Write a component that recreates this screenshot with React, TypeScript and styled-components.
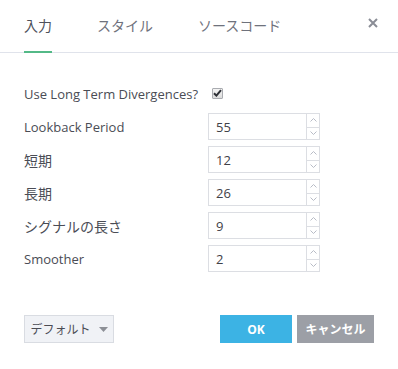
import React from "react";
import styled, { createGlobalStyle } from "styled-components";

const Global = createGlobalStyle`
  html, body { margin: 0; padding: 0; background: #ffffff; }
  body { font-family: "Open Sans", "Noto Sans CJK JP", sans-serif; }
  * { box-sizing: border-box; }
`;

const Dialog = styled.div`
  width: 398px;
  height: 369px;
  background: #fff;
  display: flex;
  flex-direction: column;
  font-family: "Open Sans", "Noto Sans CJK JP", sans-serif;
`;

const Header = styled.div`
  height: 53px;
  border-bottom: 1px solid #e0e3eb;
  display: flex;
  align-items: stretch;
  padding: 0 20px 0 24px;
  gap: 45px;
`;

const Tab = styled.div<{ $active?: boolean }>`
  display: flex;
  align-items: center;
  font-size: 14px;
  color: ${(p) => (p.$active ? "#4f525c" : "#6f727c")};
  position: relative;
  padding-bottom: 2px;
  &::after {
    content: "";
    display: ${(p) => (p.$active ? "block" : "none")};
    position: absolute;
    left: 0;
    right: 0;
    bottom: -1px;
    height: 2px;
    background: #53b987;
  }
`;

const Close = styled.div`
  margin-left: auto;
  display: flex;
  align-items: center;
  padding-bottom: 6px;
  color: #8a8d96;
`;

const Body = styled.div`
  padding: 27px 24px 0 24px;
  display: flex;
  flex-direction: column;
  gap: 6px;
`;

const Row = styled.div`
  display: grid;
  grid-template-columns: 184px 112px;
  align-items: center;
  height: 27px;
`;

const Label = styled.div<{ $cjk?: boolean }>`
  font-size: ${(p) => (p.$cjk ? "14px" : "13px")};
  color: #4a4c55;
  white-space: nowrap;
`;

const CheckBox = styled.div`
  width: 11px;
  height: 11px;
  margin-left: 4px;
  margin-top: -1px;
  border: 1px solid #a9abb0;
  border-radius: 1px;
  background: linear-gradient(#f4f4f4, #dcdcdc);
  display: flex;
  align-items: center;
  justify-content: center;
`;

const NumberBox = styled.div`
  height: 27px;
  border: 1px solid #dcdee3;
  display: grid;
  grid-template-columns: 1fr 13px;
  background: #fff;
`;

const Value = styled.div`
  display: flex;
  align-items: center;
  padding-left: 7px;
  font-size: 13px;
  color: #3f4148;
`;

const Spinner = styled.div`
  border-left: 1px solid #dcdee3;
  display: grid;
  grid-template-rows: 1fr 1fr;
`;

const SpinBtn = styled.div<{ $down?: boolean }>`
  display: flex;
  align-items: center;
  justify-content: center;
  border-top: ${(p) => (p.$down ? "1px solid #dcdee3" : "none")};
`;

const Footer = styled.div`
  margin-top: 43px;
  padding: 0 24px;
  display: flex;
  align-items: center;
  height: 28px;
`;

const DefaultBtn = styled.div`
  width: 90px;
  height: 28px;
  border: 1px solid #d9dce2;
  background: #f0f2f6;
  display: flex;
  align-items: center;
  justify-content: center;
  gap: 8px;
  font-size: 12px;
  color: #4a4c55;
`;

const Spacer = styled.div`
  flex: 1;
`;

const ActionBtn = styled.div<{ $primary?: boolean; $w: number }>`
  width: ${(p) => p.$w}px;
  height: 28px;
  display: flex;
  align-items: center;
  justify-content: center;
  font-size: 12px;
  font-weight: 700;
  color: #fff;
  background: ${(p) => (p.$primary ? "#3cb3e4" : "#9c9fa6")};
  & + & { margin-left: 5px; }
`;

const Chevron = ({ up }: { up?: boolean }) => (
  <svg width="7" height="4" viewBox="0 0 7 4">
    <path
      d={up ? "M0.5 3.5 L3.5 0.5 L6.5 3.5" : "M0.5 0.5 L3.5 3.5 L6.5 0.5"}
      fill="none"
      stroke="#b8bcc6"
      strokeWidth="1"
    />
  </svg>
);

const NumField = ({ v }: { v: string }) => (
  <NumberBox>
    <Value>{v}</Value>
    <Spinner>
      <SpinBtn>
        <Chevron up />
      </SpinBtn>
      <SpinBtn $down>
        <Chevron />
      </SpinBtn>
    </Spinner>
  </NumberBox>
);

const fields: [string, string, boolean][] = [
  ["Lookback Period", "55", false],
  ["短期", "12", true],
  ["長期", "26", true],
  ["シグナルの長さ", "9", true],
  ["Smoother", "2", false],
];

export default function App() {
  return (
    <>
      <Global />
      <Dialog>
        <Header>
          <Tab $active>入力</Tab>
          <Tab>スタイル</Tab>
          <Tab>ソースコード</Tab>
          <Close>
            <svg width="10" height="10" viewBox="0 0 10 10">
              <path d="M1 1 L9 9 M9 1 L1 9" stroke="#8a8d96" strokeWidth="2" />
            </svg>
          </Close>
        </Header>
        <Body>
          <Row>
            <Label>Use Long Term Divergences?</Label>
            <CheckBox>
              <svg width="9" height="8" viewBox="0 0 9 8">
                <path d="M1 4.2 L3.4 6.6 L8 1.2" fill="none" stroke="#2e3036" strokeWidth="2" />
              </svg>
            </CheckBox>
          </Row>
          {fields.map(([l, v, cjk]) => (
            <Row key={l}>
              <Label $cjk={cjk}>{l}</Label>
              <NumField v={v} />
            </Row>
          ))}
        </Body>
        <Footer>
          <DefaultBtn>
            <span>デフォルト</span>
            <svg width="9" height="5" viewBox="0 0 9 5">
              <path d="M0 0 L9 0 L4.5 5 Z" fill="#8c8f96" />
            </svg>
          </DefaultBtn>
          <Spacer />
          <ActionBtn $primary $w={72}>OK</ActionBtn>
          <ActionBtn $w={77}>キャンセル</ActionBtn>
        </Footer>
      </Dialog>
    </>
  );
}
